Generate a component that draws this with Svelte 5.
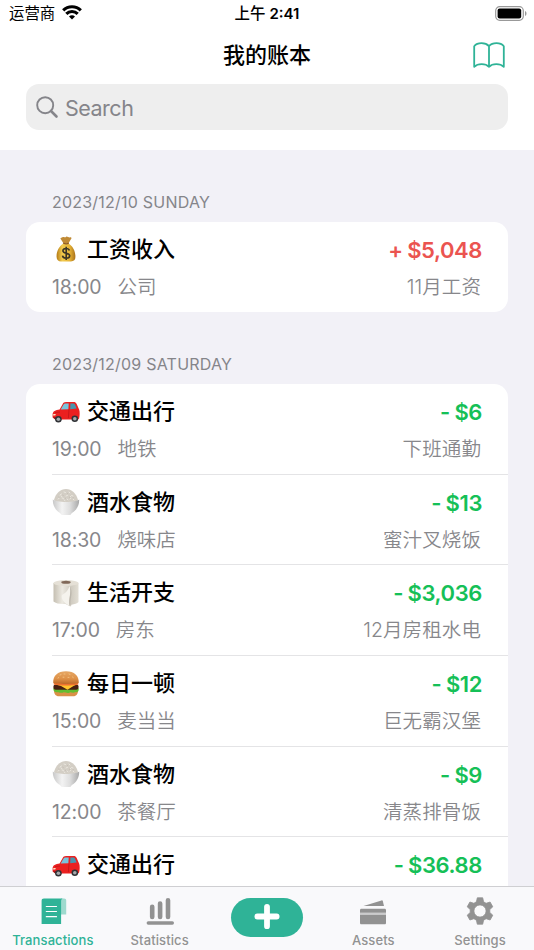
<script lang="ts">
	interface Entry {
		icon: 'bag' | 'car' | 'rice' | 'paper' | 'burger';
		title: string;
		amount: string;
		time: string;
		place: string;
		note: string;
		income?: boolean;
	}

	interface Day {
		label: string;
		entries: Entry[];
	}

	let days: Day[] = $state([
		{
			label: '2023/12/10 SUNDAY',
			entries: [
				{ icon: 'bag', title: '工资收入', amount: '+ $5,048', time: '18:00', place: '公司', note: '11月工资', income: true }
			]
		},
		{
			label: '2023/12/09 SATURDAY',
			entries: [
				{ icon: 'car', title: '交通出行', amount: '- $6', time: '19:00', place: '地铁', note: '下班通勤' },
				{ icon: 'rice', title: '酒水食物', amount: '- $13', time: '18:30', place: '烧味店', note: '蜜汁叉烧饭' },
				{ icon: 'paper', title: '生活开支', amount: '- $3,036', time: '17:00', place: '房东', note: '12月房租水电' },
				{ icon: 'burger', title: '每日一顿', amount: '- $12', time: '15:00', place: '麦当当', note: '巨无霸汉堡' },
				{ icon: 'rice', title: '酒水食物', amount: '- $9', time: '12:00', place: '茶餐厅', note: '清蒸排骨饭' },
				{ icon: 'car', title: '交通出行', amount: '- $36.88', time: '', place: '', note: '' }
			]
		}
	]);

	let active = $state('Transactions');
	let query = $state('');
</script>

{#snippet picture(name: string)}
	<svg class="picture" viewBox="0 0 28 28">
		{#if name === 'bag'}
			<path d="M10 2.500c2-1.400 3 .4 4-.6 1.200-1 2.400 1 4.600.4 1 0 1.300 1 .3 2l-2.500 4.100h-4.800L8.700 4.100C8 3.300 9 2.500 10 2.500Z" fill="#c08a35" />
			<path d="M11.500 8.500C7 11 4.300 16.500 4.600 22c.1 3 1.800 4.400 4.400 4.400h10c2.800 0 4.400-1.500 4.400-4.400.2-5.600-2.500-11-7-13.500Z" fill="url(#gold)" />
			<path d="M11.500 8.300c2 .7 3.500.7 5 0" fill="none" stroke="#8e5a26" stroke-width="1.200" stroke-linecap="round" />
			<path d="M17.400 15.500c-.4-1.500-1.700-2-3.300-2-1.900 0-3.200.9-3.200 2.300 0 3.300 6.800 1.500 6.800 5 0 1.500-1.500 2.400-3.500 2.400-2.100 0-3.500-.9-3.700-2.500M14.200 11.700v13.200" fill="none" stroke="#3c3525" stroke-width="1.600" />
		{:else if name === 'car'}
			<path d="M.6 17.500c0-3.500 3-4.600 7-5.100L10.700 7c.7-1.200 1.600-1.900 3.300-1.900h7.500c1.600 0 2.600.5 3.300 2.200l2.400 5.500c.7 2 .6 6.200-.1 8.700l-1 1H3.200L.6 20.500Z" fill="#eb2020" />
			<path d="M8.700 12.400 11.400 7.800c.6-.9 1.200-1.200 2.300-1.200h3l-.3 5.600Z" fill="#78c4dc" />
			<path d="M18.400 6.600h2.700c1 0 1.600.3 2 1.200l1.600 3.700-6.500.7Z" fill="#4995ae" />
			<path d="m17 12.500-.6 8.500M3 15.500l5-.5" stroke="#b41016" stroke-width=".6" fill="none" />
			<path d="M1.400 17h2.400l-.5 1.500H1Z" fill="#ffe4c4" />
			<path d="M1 20.300h8v2H3Z" fill="#8e1518" />
			<circle cx="6.400" cy="22.200" r="3.300" fill="#303236" />
			<circle cx="6.400" cy="22.200" r="1.800" fill="#a5a9ac" />
			<circle cx="22.800" cy="21.700" r="3.300" fill="#303236" />
			<circle cx="22.800" cy="21.700" r="1.800" fill="#a5a9ac" />
		{:else if name === 'rice'}
			<path d="M2 12C3.500 5.500 8.500 1 14 1S24.500 5.500 26 12l-2 3H4Z" fill="#d3cec5" />
			<path d="m8 7 1.500-1M12 4l1.500.5M17 4l1 1M21 8l-1.400-.5M6 11l1.300-.8M10 10l1.500.4M14 8l1.500-.6M18 11l1-.8M22 12l-1-1M12 12l1 .6M9 8l1 .7M15 11l1 .8M19 8l-1 1" stroke="#ebe7df" stroke-width="1" stroke-linecap="round" />
			<path d="m6.500 9 1 .5M10.500 7l1 .6M15 5l.8.7M17 9l1 .6M20.500 10l1-.5M13 10l.8.5" stroke="#b6afa4" stroke-width=".6" />
			<path d="M.8 11.500c3 3.300 23.400 3.300 26.400 0 .2 6.200-2.800 10.900-7.300 13.500l-1.600 2H9.700L8 25C3.500 22.400.6 17.700.8 11.500Z" fill="url(#bowl)" />
		{:else if name === 'paper'}
			<path d="M1.500 4v18.500c2 2 8 2.900 12 2.400l4.400 2.400c.8.400 1.500-.6 1.500-1.500 3-.4 6.100-1.300 7.100-2.700V4Z" fill="url(#sheet)" />
			<ellipse cx="14" cy="4" rx="12.500" ry="3" fill="#e5e0d6" />
			<ellipse cx="14" cy="3.200" rx="4.700" ry="1.500" fill="#806858" />
			<path d="M17.500 6.700c-1.300 5.600-5.200 7.800-7.700 9.500-.7 4 2.200 7.700 7.700 10.600C15.600 20 20.500 14.500 17.500 6.700Z" fill="#f5f3ed" />
			<path d="M17.700 7c1.800 6.800-1.200 12-.2 19.800 1.200-.3 1-1.500 1-3 0-5.500 2.800-11-.8-16.800Z" fill="#bcb7ad" />
		{:else}
			<path d="M2 20h24c.2 3.700-1.400 6.300-5 6.300H7c-3.600 0-5.200-2.600-5-6.300Z" fill="#d99047" />
			<path d="M1.500 18c2-2 23 0 25 0 1 3.200-1 4.500-3.200 4.100-2 1.500-4 0-5.500.3-2 1-4 .2-6-.1-2 1-3.700.5-5.400-.1-3 .2-5.600-.7-4.900-4.200Z" fill="#62bd31" />
			<path d="M2 15h24c1.200 1.800.5 4.700-1.700 4.700H3.700c-2.200 0-2.900-2.900-1.700-4.700Z" fill="#471f12" />
			<path d="M3 14.200h22.500l-4 1.900-6 3.700-6.500-3.700Z" fill="#ffc52c" />
			<path d="M1.700 12.500h24.600v2c-3 1.300-21.600 1.300-24.600 0Z" fill="#ee7130" />
			<path d="M1.200 12.700C1 5.700 5.500 1.200 14 1.200S27 5.700 26.800 12.700c-2 1.600-23.600 1.600-25.600 0Z" fill="url(#bun)" />
			<path d="m8 5 1-.4M12 4h1M17 4l1 .4M20.500 7l.7.5M6 8l.7-.4M11 7.200h1M16 7.400h1" stroke="#f6cb8b" stroke-width=".8" stroke-linecap="round" />
		{/if}
	</svg>
{/snippet}

<svg class="defs" aria-hidden="true">
	<defs>
		<linearGradient id="gold">
			<stop offset="0" stop-color="#b57b16" />
			<stop offset=".3" stop-color="#f2cb4e" />
			<stop offset=".7" stop-color="#e6b336" />
			<stop offset="1" stop-color="#a9711b" />
		</linearGradient>
		<linearGradient id="bowl">
			<stop offset="0" stop-color="#c8c8c8" />
			<stop offset=".35" stop-color="#f3f3f3" />
			<stop offset=".65" stop-color="#dedede" />
			<stop offset="1" stop-color="#a8a8a8" />
		</linearGradient>
		<linearGradient id="sheet">
			<stop offset="0" stop-color="#c5bfb2" />
			<stop offset=".35" stop-color="#ece9e1" />
			<stop offset=".7" stop-color="#d0cbc0" />
			<stop offset="1" stop-color="#e2ded4" />
		</linearGradient>
		<linearGradient id="bun" x2="0" y2="1">
			<stop offset="0" stop-color="#e5a765" />
			<stop offset=".6" stop-color="#de9148" />
			<stop offset="1" stop-color="#bd6929" />
		</linearGradient>
	</defs>
</svg>

<div class="phone">
	<header>
		<div class="status">
			<div class="carrier">
				<span>运营商</span>
				<svg width="20" height="15" viewBox="0 0 20 15" fill="none" stroke="#000" stroke-width="3.100">
					<path d="M1.200 5.400a12.400 12.400 0 0 1 17.600 0M4.300 8.900a8 8 0 0 1 11.400 0" />
					<path d="m10 14.500-3-3a4.250 4.250 0 0 1 6 0Z" fill="#000" stroke="none" />
				</svg>
			</div>
			<div class="clock">上午 <b>2:41</b></div>
			<svg class="battery" width="32" height="15" viewBox="0 0 32 15">
				<rect x=".7" y=".7" width="27.600" height="13.600" rx="4" fill="none" stroke="#999" stroke-width="1.200" />
				<rect x="2.600" y="2.600" width="23.600" height="9.800" rx="2" />
				<path d="M30 5c2 .7 2 4.300 0 5Z" fill="#999" />
			</svg>
		</div>

		<div class="nav">
			<h1>我的账本</h1>
			<button class="book" aria-label="Books">
				<svg width="32" height="27" viewBox="0 0 32 27" fill="none" stroke="#2fb397" stroke-width="1.800" stroke-linejoin="round" stroke-linecap="round">
					<path d="M16 4.200C12.500.2 4.500.2 1.200 4.200v20.600c3.600-3.600 11.400-3.600 14.800 0 3.400-3.600 11.200-3.600 14.800 0V4.200C27.500.2 19.500.2 16 4.200Zm0 0v20.600" />
				</svg>
			</button>
		</div>

		<label class="search">
			<svg width="23" height="23" viewBox="0 0 23 23" fill="none" stroke="#85858a" stroke-width="1.900">
				<circle cx="9.200" cy="9.200" r="8" />
				<path d="m15 15 5.500 5.500" stroke-width="2.600" stroke-linecap="round" />
			</svg>
			<input bind:value={query} placeholder="Search" />
		</label>
	</header>

	<main>
		{#each days as day}
			<section>
				<h2>{day.label}</h2>
				<div class="card">
					{#each day.entries as entry}
						<article>
							<div class="line top">
								{@render picture(entry.icon)}
								<h3>{entry.title}</h3>
								<strong class:income={entry.income}>{entry.amount}</strong>
							</div>
							<div class="line detail">
								<time>{entry.time}</time>
								<span>{entry.place}</span>
								<span class="note">{entry.note}</span>
							</div>
						</article>
					{/each}
				</div>
			</section>
		{/each}
	</main>

	<nav class="tabs">
		<button class:active={active === 'Transactions'} onclick={() => (active = 'Transactions')}>
			<svg viewBox="0 0 28 28" fill="currentColor">
				<path d="M21 1.500h3c1.500 0 2.200.8 2.200 2.200v13.800H21Z" opacity=".45" />
				<path d="M4 1.500h18.600c-1 .5-1.500 1.400-1.500 2.700V27H1.600V3.900c0-1.600.8-2.400 2.400-2.400Z" />
				<path d="M6.300 9.500h10.200M6.300 14.500h10.200M6.300 19.700h10.200" stroke="#fff" stroke-width="1.200" stroke-linecap="round" />
			</svg>
			<span>Transactions</span>
		</button>
		<button class:active={active === 'Statistics'} onclick={() => (active = 'Statistics')}>
			<svg viewBox="0 0 28 28" fill="none" stroke="currentColor" stroke-width="4.600" stroke-linecap="round">
				<path d="M6.200 9.700v10.200M14.100 6.600v13.300M22 3.200v16.700" />
				<path d="M2.300 26h24" stroke-width="3.400" />
			</svg>
			<span>Statistics</span>
		</button>
		<button class="add" aria-label="Add">
			<svg viewBox="0 0 28 28" fill="none" stroke="#fff" stroke-width="6" stroke-linecap="round">
				<path d="M14 4v20M4 14h20" />
			</svg>
		</button>
		<button class:active={active === 'Assets'} onclick={() => (active = 'Assets')}>
			<svg viewBox="0 0 28 28" fill="currentColor">
				<path d="m4.500 9 18-5.600c.7-.2 1.100 0 1.300.7L25 9Z" />
				<path d="M2.500 11.700h23c1 0 1.500.5 1.500 1.500v2.600H1v-2.600c0-1 .5-1.500 1.500-1.500ZM1 17.700h26v8c0 1-.5 1.500-1.500 1.500h-23C1.500 27.200 1 26.700 1 25.700Z" />
				<path d="M1 15.800h26v1.900H1Z" opacity=".45" />
			</svg>
			<span>Assets</span>
		</button>
		<button class:active={active === 'Settings'} onclick={() => (active = 'Settings')}>
			<svg viewBox="0 0 28 28">
				<path fill="currentColor" fill-rule="evenodd" d="M11.300.8h5.400l.9 4 2.500 1.500 4-1.300L26.800 9.800 23.800 12.500v3L26.800 18.200 24.100 23l-4-1.300-2.500 1.500-.9 4h-5.400l-.9-4-2.500-1.500-4 1.300L1.200 18.200 4.200 15.500v-3L1.200 9.800 3.900 5l4 1.300 2.500-1.500ZM14 7.900a6.100 6.100 0 1 0 0 12.200 6.100 6.100 0 1 0 0-12.200Z" stroke="currentColor" stroke-width=".8" stroke-linejoin="round" />
			</svg>
			<span>Settings</span>
		</button>
	</nav>
</div>

<style>
	:global(body) {
		margin: 0;
		overflow: hidden;
	}

	* {
		box-sizing: border-box;
	}

	.phone {
		display: flex;
		flex-direction: column;
		width: 534px;
		height: 950px;
		overflow: hidden;
		background: #f2f1f7;
		color: #000;
		font-family: Inter, 'Noto Sans CJK SC', sans-serif;
	}

	.defs {
		position: absolute;
		width: 0;
		height: 0;
	}

	h1,
	h2,
	h3 {
		margin: 0;
	}

	button {
		padding: 0;
		border: 0;
		background: none;
		font: inherit;
	}

	header {
		flex: none;
		height: 150px;
		background: #fff;
	}

	.status {
		display: grid;
		grid-template-columns: 1fr auto 1fr;
		height: 28px;
		padding: 0 7px 0 9px;
		align-items: center;
		font-size: 15.4px;
		line-height: 28px;
	}

	.carrier {
		display: flex;
		align-items: center;
		gap: 7px;
	}

	.carrier svg {
		margin-top: -3px;
	}

	.clock {
		padding-right: 2px;
		font-weight: 500;
	}

	.clock b {
		font-size: 15px;
		font-weight: 600;
	}

	.battery {
		justify-self: end;
		margin-top: -2px;
	}

	.nav {
		display: grid;
		grid-template-columns: 1fr auto 1fr;
		height: 56px;
		padding: 0 29px 2px;
		align-items: center;
	}

	h1 {
		grid-column: 2;
		font-size: 22px;
		font-weight: 500;
		line-height: 54px;
	}

	.book {
		display: flex;
		justify-self: end;
	}

	.search {
		display: flex;
		align-items: center;
		gap: 6px;
		height: 46px;
		margin: 0 26px;
		padding: 0 10px;
		border-radius: 13px;
		background: #eee;
	}

	.search input {
		width: 300px;
		padding: 1px 0 0;
		border: 0;
		outline: 0;
		background: none;
		font: 400 21.500px/44px Inter, sans-serif;
		letter-spacing: -0.5px;
	}

	.search input::placeholder {
		color: #85858a;
	}

	main {
		flex: 1;
		min-height: 0;
		padding: 0 26px;
		overflow: hidden;
	}

	h2 {
		height: 71.500px;
		padding: 42px 26px 0;
		color: #85858a;
		font-size: 16px;
		font-weight: 400;
		line-height: 21px;
		letter-spacing: 0.22px;
	}

	.card {
		border-radius: 14px;
		background: #fff;
	}

	article {
		height: 90.700px;
		margin-left: 26px;
		padding: 12px 26px 0 0;
	}

	article + article {
		border-top: 1px solid #e4e4e6;
	}

	article:first-child:not(:last-child) {
		height: 90px;
	}

	.line {
		display: flex;
		align-items: center;
	}

	.top {
		height: 32px;
	}

	.picture {
		flex: none;
		width: 28px;
		height: 28px;
		margin-top: -1px;
		margin-right: 7px;
	}

	h3 {
		font-size: 22px;
		font-weight: 500;
		line-height: 30px;
		margin-top: -2px;
	}

	strong {
		margin-left: auto;
		color: #15c057;
		font-size: 22px;
		font-weight: 600;
		letter-spacing: -0.4px;
		word-spacing: -0.600px;
	}

	.income {
		color: #eb5450;
	}

	.detail {
		height: 30px;
		margin-top: 6px;
		color: #87878b;
		font-size: 19.500px;
		font-weight: 350;
		line-height: 30px;
	}

	time {
		margin-right: 16px;
		font-weight: 400;
		letter-spacing: -0.150px;
	}

	.note {
		margin-right: 1px;
		margin-left: auto;
		letter-spacing: 0.1px;
	}

	.tabs {
		display: grid;
		flex: none;
		grid-template-columns: repeat(5, 1fr);
		height: 64px;
		border-top: 1px solid #cfcfd2;
		background: #f9f9fb;
	}

	.tabs button {
		display: flex;
		flex-direction: column;
		align-items: center;
		padding: 10px 1px 0 0;
		color: #929292;
		font-size: 13px;
		font-weight: 500;
		line-height: 17px;
		letter-spacing: 0.1px;
	}

	.tabs svg {
		width: 28px;
		height: 28px;
		margin-bottom: 7px;
	}

	.tabs .active {
		color: #2fb397;
	}

	.tabs button:first-child svg {
		margin-left: 3px;
	}

	.tabs .add {
		align-self: start;
		justify-self: center;
		width: 72px;
		height: 39px;
		margin-top: 11px;
		padding: 5px 0 0;
		border-radius: 20px;
		background: #2fb397;
	}
</style>
